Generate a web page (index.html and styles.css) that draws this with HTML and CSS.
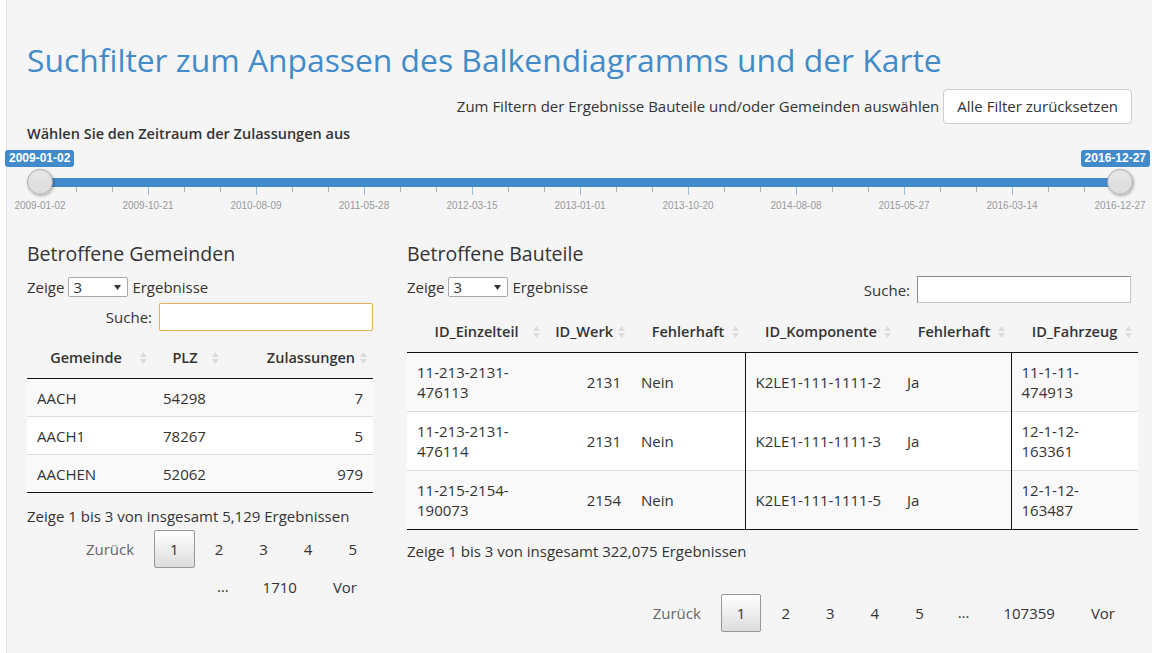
FILE: index.html
```html
<!DOCTYPE html>
<html lang="de">
<head>
<meta charset="utf-8">
<title>Suchfilter</title>
<link rel="stylesheet" href="styles.css">
</head>
<body>
<div class="page">
  <div class="well">
    <h1 class="title">Suchfilter zum Anpassen des Balkendiagramms und der Karte</h1>
    <div class="filter-row">
      <span class="hint">Zum Filtern der Ergebnisse Bauteile und/oder Gemeinden auswählen</span>
      <button class="btn">Alle Filter zurücksetzen</button>
    </div>
    <div class="slider-label">Wählen Sie den Zeitraum der Zulassungen aus</div>
    <div class="slider">
      <div class="bar"></div>
      <div class="ticks">
        <i></i><i></i><i></i><i></i><i></i><i></i><i></i><i></i><i></i><i></i>
        <i></i><i></i><i></i><i></i><i></i><i></i><i></i><i></i><i></i><i></i>
        <i></i><i></i><i></i><i></i><i></i><i></i><i></i><i></i><i></i><i></i>
        <i></i>
      </div>
      <div class="tick-labels">
        <span>2009-01-02</span><span>2009-10-21</span><span>2010-08-09</span><span>2011-05-28</span>
        <span>2012-03-15</span><span>2013-01-01</span><span>2013-10-20</span><span>2014-08-08</span>
        <span>2015-05-27</span><span>2016-03-14</span><span>2016-12-27</span>
      </div>
      <span class="handle handle-from"></span>
      <span class="handle handle-to"></span>
      <span class="val val-from">2009-01-02</span>
      <span class="val val-to">2016-12-27</span>
    </div>

    <div class="cols">
      <section class="col col-left">
        <h4>Betroffene Gemeinden</h4>
        <div class="length">Zeige <span class="select"><span>3</span><svg width="7" height="5" viewBox="0 0 7 5"><path d="M0 0h7L3.5 5z" fill="#333"/></svg></span> Ergebnisse</div>
        <div class="search">Suche: <span class="input input-focus"></span></div>
        <table class="dt dt-left">
          <colgroup><col class="w126"><col class="w72"><col class="w148"></colgroup>
          <thead>
            <tr>
              <th><svg class="sort" width="7" height="12" viewBox="0 0 7 12"><path d="M0 5L3.5 0 7 5z"/><path d="M0 7L3.5 12 7 7z"/></svg>Gemeinde</th>
              <th><svg class="sort" width="7" height="12" viewBox="0 0 7 12"><path d="M0 5L3.5 0 7 5z"/><path d="M0 7L3.5 12 7 7z"/></svg>PLZ</th>
              <th class="r"><svg class="sort" width="7" height="12" viewBox="0 0 7 12"><path d="M0 5L3.5 0 7 5z"/><path d="M0 7L3.5 12 7 7z"/></svg>Zulassungen</th>
            </tr>
          </thead>
          <tbody>
            <tr class="odd"><td>AACH</td><td>54298</td><td class="r">7</td></tr>
            <tr class="even"><td>AACH1</td><td>78267</td><td class="r">5</td></tr>
            <tr class="odd"><td>AACHEN</td><td>52062</td><td class="r">979</td></tr>
          </tbody>
        </table>
        <div class="info info-left">Zeige 1 bis 3 von insgesamt 5,129 Ergebnissen</div>
        <div class="pager pager-left">
          <span class="pg prev">Zurück</span>
          <span class="pg cur">1</span>
          <span class="pg">2</span>
          <span class="pg">3</span>
          <span class="pg">4</span>
          <span class="pg">5</span>
          <span class="ell">…</span>
          <span class="pg">1710</span>
          <span class="pg">Vor</span>
        </div>
      </section>

      <section class="col col-right">
        <h4>Betroffene Bauteile</h4>
        <div class="controls">
          <div class="length">Zeige <span class="select"><span>3</span><svg width="7" height="5" viewBox="0 0 7 5"><path d="M0 0h7L3.5 5z" fill="#333"/></svg></span> Ergebnisse</div>
          <div class="search">Suche: <span class="input input-plain"></span></div>
        </div>
        <table class="dt dt-right">
          <colgroup><col class="w139"><col class="w85"><col class="w114"><col class="w152"><col class="w114"><col class="w127"></colgroup>
          <thead>
            <tr>
              <th><svg class="sort" width="7" height="12" viewBox="0 0 7 12"><path d="M0 5L3.5 0 7 5z"/><path d="M0 7L3.5 12 7 7z"/></svg>ID_Einzelteil</th>
              <th class="r"><svg class="sort" width="7" height="12" viewBox="0 0 7 12"><path d="M0 5L3.5 0 7 5z"/><path d="M0 7L3.5 12 7 7z"/></svg>ID_Werk</th>
              <th><svg class="sort" width="7" height="12" viewBox="0 0 7 12"><path d="M0 5L3.5 0 7 5z"/><path d="M0 7L3.5 12 7 7z"/></svg>Fehlerhaft</th>
              <th><svg class="sort" width="7" height="12" viewBox="0 0 7 12"><path d="M0 5L3.5 0 7 5z"/><path d="M0 7L3.5 12 7 7z"/></svg>ID_Komponente</th>
              <th><svg class="sort" width="7" height="12" viewBox="0 0 7 12"><path d="M0 5L3.5 0 7 5z"/><path d="M0 7L3.5 12 7 7z"/></svg>Fehlerhaft</th>
              <th><svg class="sort" width="7" height="12" viewBox="0 0 7 12"><path d="M0 5L3.5 0 7 5z"/><path d="M0 7L3.5 12 7 7z"/></svg>ID_Fahrzeug</th>
            </tr>
          </thead>
          <tbody>
            <tr class="odd"><td>11-213-2131-476113</td><td class="r">2131</td><td>Nein</td><td class="bl">K2LE1-111-1111-2</td><td>Ja</td><td class="bl narrow">11-1-11-474913</td></tr>
            <tr class="even"><td>11-213-2131-476114</td><td class="r">2131</td><td>Nein</td><td class="bl">K2LE1-111-1111-3</td><td>Ja</td><td class="bl narrow">12-1-12-163361</td></tr>
            <tr class="odd"><td>11-215-2154-190073</td><td class="r">2154</td><td>Nein</td><td class="bl">K2LE1-111-1111-5</td><td>Ja</td><td class="bl narrow">12-1-12-163487</td></tr>
          </tbody>
        </table>
        <div class="info info-right">Zeige 1 bis 3 von insgesamt 322,075 Ergebnissen</div>
        <div class="pager pager-right">
          <span class="pg prev">Zurück</span>
          <span class="pg cur">1</span>
          <span class="pg">2</span>
          <span class="pg">3</span>
          <span class="pg">4</span>
          <span class="pg">5</span>
          <span class="ell">…</span>
          <span class="pg">107359</span>
          <span class="pg">Vor</span>
        </div>
      </section>
    </div>
  </div>
</div>
</body>
</html>
```

FILE: styles.css
```css
* { box-sizing: border-box; }

body {
  margin: 0;
  font-family: "Open Sans", "DejaVu Sans", sans-serif;
  font-size: 15px;
  color: #333;
  background: #fff;
}

.page {
  padding-left: 6px;
}

.well {
  background: #f5f5f5;
  border-left: 1px solid #e3e3e3;
  padding: 42px 20px 0 20px;
  min-height: 653px;
}

.title {
  margin: 0;
  font-size: 31.8px;
  line-height: 36px;
  font-weight: 400;
  color: #428bca;
}

.filter-row {
  display: flex;
  justify-content: flex-end;
  align-items: center;
  gap: 4px;
  margin-top: 10px;
  height: 36px;
}

.btn {
  font-family: inherit;
  font-size: 15px;
  height: 35px;
  padding: 0 13px;
  background: #fff;
  border: 1px solid #ccc;
  border-radius: 4px;
  color: #333;
}

.slider-label {
  font-size: 14.5px;
  font-weight: 600;
  line-height: 20px;
}

/* range slider widget: internal parts placed on the widget's own track */
.slider {
  position: relative;
  height: 76px;
  font-family: "Liberation Sans", Arial, sans-serif;
}

.bar {
  position: absolute;
  left: 13px;
  right: 12px;
  top: 34px;
  height: 9px;
  background: #428bca;
}

.ticks {
  position: absolute;
  left: 13px;
  width: 1081px;
  top: 43px;
  display: flex;
  justify-content: space-between;
  align-items: flex-start;
}

.ticks i {
  display: block;
  width: 1px;
  height: 5px;
  background: #b0b0b0;
}

.ticks i:nth-child(3n+1) {
  height: 8px;
  background: #9cbfdf;
}

.tick-labels {
  position: absolute;
  left: -41px;
  top: 56px;
  display: flex;
}

.tick-labels span {
  width: 108px;
  text-align: center;
  font-size: 10px;
  line-height: 12px;
  color: #999;
}

.handle {
  position: absolute;
  top: 25px;
  width: 26px;
  height: 26px;
  border-radius: 50%;
  background: linear-gradient(#e8e8e8, #dadada);
  border: 1px solid #acacac;
  box-shadow: 1px 1px 3px rgba(0, 0, 0, 0.3);
}

.handle-from { left: 0; }
.handle-to { left: 1080px; }

.val {
  position: absolute;
  top: 6px;
  height: 17px;
  line-height: 17px;
  padding: 0 4px;
  background: #428bca;
  color: #fff;
  font-size: 12px;
  font-weight: 700;
  border-radius: 3px;
}

.val-from { left: -22px; }
.val-to { right: -18px; }

/* columns */
.cols {
  display: flex;
  gap: 34px;
  padding-top: 22px;
}

.col-left { width: 346px; }
.col-right { width: 724px; }

.col h4 {
  margin: 0;
  font-size: 19.5px;
  line-height: 24px;
  font-weight: 400;
}

.length {
  display: flex;
  align-items: center;
  gap: 4px;
  height: 22px;
  margin-top: 10px;
}

.select {
  display: inline-flex;
  align-items: center;
  justify-content: space-between;
  width: 60px;
  height: 20px;
  padding: 0 6px 0 4px;
  background: #fff;
  border: 1px solid #a9a9a9;
  border-radius: 2px;
}

.search {
  display: flex;
  align-items: center;
  justify-content: flex-end;
  gap: 7px;
}

.input {
  display: block;
  width: 214px;
  background: #fff;
}

.input-focus {
  height: 28px;
  border: 1px solid #e2b35e;
  border-radius: 2px;
  box-shadow: 0 0 1px #f0c97a;
}

.input-plain {
  height: 27px;
  border: 1px solid #c4c4c4;
  border-top-color: #8c8c8c;
  border-left-color: #8c8c8c;
}

.col-left .search { margin-top: 5px; }

.controls {
  display: flex;
  justify-content: space-between;
  align-items: flex-start;
  margin-top: 10px;
}

.controls .length { margin-top: 0; }

/* tables */
.dt {
  border-collapse: collapse;
  table-layout: fixed;
}

.dt-left { width: 346px; margin-top: 7px; }
.dt-right { width: 731px; margin-top: 9px; }

.w126 { width: 126px; }
.w72 { width: 72px; }
.w148 { width: 148px; }
.w139 { width: 139px; }
.w85 { width: 85px; }
.w114 { width: 114px; }
.w152 { width: 152px; }
.w127 { width: 127px; }

.dt th {
  padding: 10px 6px 10px 18px;
  font-size: 14.5px;
  line-height: 20px;
  font-weight: 600;
  text-align: center;
  white-space: nowrap;
  border-bottom: 1px solid #111;
}

.dt-left th { padding-left: 10px; }

.dt th.r { text-align: right; }
.dt-right th.r { padding-left: 0; }

.sort {
  float: right;
  margin: 4px 0 0 5px;
  fill: #dcdcdc;
}

.dt td {
  padding: 9px 10px;
  line-height: 20px;
  border-top: 1px solid #ddd;
}

.dt-left td { padding: 9px 10px 8px; }

.dt tbody tr:first-child td { border-top: none; }
.dt tbody tr:last-child td { border-bottom: 1px solid #111; }

.dt tr.odd td { background: #f9f9f9; }
.dt tr.even td { background: #fff; }

.dt td.r { text-align: right; }
.dt td.bl { border-left: 1px solid #111; }
.dt td.narrow { padding-right: 20px; }

.info {
  line-height: 20px;
}

.info-left { margin-top: 13px; }
.info-right { margin-top: 11px; }

.pager {
  display: flex;
  flex-wrap: wrap;
  justify-content: flex-end;
  margin-left: auto;
}

.pager-left { width: 320px; margin-top: 4px; }
.pager-right { margin-top: 33px; }

.pg {
  padding: 8px 15px;
  line-height: 20px;
  border: 1px solid transparent;
  border-radius: 2px;
  margin-left: 4px;
  color: #333;
}

.pg.prev { color: #666; }

.pg.cur {
  border-color: #979797;
  background: linear-gradient(#fff, #dcdcdc);
}

.ell {
  padding: 8px 14px;
  line-height: 20px;
  margin-left: 4px;
}
```
